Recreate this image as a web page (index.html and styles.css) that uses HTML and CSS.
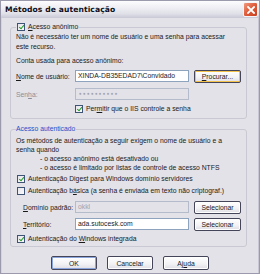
FILE: index.html
```html
<!DOCTYPE html>
<html>
<head>
<meta charset="utf-8">
<link rel="stylesheet" href="styles.css">
</head>
<body>
<div class="window">
  <div class="titlebar">
    <span class="title">Métodos de autenticação</span>
    <span class="close"><svg width="8" height="8" viewBox="0 0 8 8"><path d="M1 1L7 7M7 1L1 7" stroke="#fff" stroke-width="1.8" stroke-linecap="square"/></svg></span>
  </div>
  <div class="body">
    <div class="group g1">
      <div class="legend"><span class="cb on"></span><span><u>A</u>cesso anônimo</span></div>
      <p class="desc">Não é necessário ter um nome de usuário e uma senha para acessar<br>este recurso.</p>
      <p class="conta">Conta usada para acesso anônimo:</p>
      <div class="row r-nome">
        <span class="lbl"><u>N</u>ome de usuário:</span>
        <span class="input">XINDA-DB35EDAD7\Convidado</span>
        <span class="btn hot"><u>P</u>rocurar...</span>
      </div>
      <div class="row r-senha">
        <span class="lbl dim">Sen<u>h</u>a:</span>
        <span class="input off dots">●●●●●●●●●●</span>
      </div>
      <div class="cbrow r-permitir"><span class="cb on"></span><span>Per<u>m</u>itir que o IIS controle a senha</span></div>
    </div>
    <div class="group g2">
      <div class="legend blue">Acesso autenticado</div>
      <p class="desc2">Os métodos de autenticação a seguir exigem o nome de usuário e a<br>senha quando<br><span class="ind">- o acesso anônimo está desativado ou</span><br><span class="ind">- o acesso é limitado por listas de controle de acesso NTFS</span></p>
      <div class="cbrow r-digest"><span class="cb on"></span><span>Autenticação Digest para Windows domínio servidores</span></div>
      <div class="cbrow r-basica"><span class="cb"></span><span>Autenticação b<u>á</u>sica (a senha é enviada em texto não criptograf.)</span></div>
      <div class="row r-dominio">
        <span class="lbl2"><u>D</u>omínio padrão:</span>
        <span class="input off">okkl</span>
        <span class="btn">Selecionar</span>
      </div>
      <div class="row r-terr">
        <span class="lbl2"><u>T</u>erritório:</span>
        <span class="input">ada.sutocesk.com</span>
        <span class="btn">Selecionar</span>
      </div>
      <div class="cbrow r-win"><span class="cb on"></span><span>Autenticação do <u>W</u>indows integrada</span></div>
    </div>
    <div class="buttons">
      <span class="btn big def">OK</span>
      <span class="btn big">Cancelar</span>
      <span class="btn big">Aj<u>u</u>da</span>
    </div>
  </div>
</div>
</body>
</html>
```
FILE: styles.css
```css
* { box-sizing: border-box; }
html, body { margin: 0; padding: 0; background: #ffffff; }
body {
  font-family: "Liberation Sans", Arial, sans-serif;
  font-size: 6.8px;
  color: #1a1a1a;
}
u { text-decoration: underline; text-underline-offset: 1px; }
p { margin: 0; }

.window {
  width: 260px;
  height: 274px;
  background: #e3e2e8;
  border: 1px solid #9a9aac;
  display: flex;
  flex-direction: column;
}
.titlebar {
  height: 17px;
  flex: none;
  display: flex;
  align-items: center;
  justify-content: space-between;
  padding: 0 1px 0 4px;
  background: linear-gradient(#fdfdfe 0%, #f0f0f5 35%, #e0e0e8 75%, #c8c8d6 100%);
}
.title {
  font-family: "DejaVu Sans", sans-serif;
  font-weight: bold;
  font-size: 7.6px;
  letter-spacing: 0.1px;
  color: #101020;
}
.close {
  width: 15px;
  height: 15px;
  border: 1px solid #f4f4f8;
  border-radius: 2px;
  background: linear-gradient(135deg, #f09a80 0%, #e0603f 45%, #c8401f 100%);
  display: flex;
  align-items: center;
  justify-content: center;
}
.body {
  flex: 1;
  padding: 9px 11px 0 8px;
  border-left: 1px solid #d4d4dc;
  border-right: 1px solid #c8c8d4;
  display: flex;
  flex-direction: column;
}
.group {
  border: 1px solid #c9c9d3;
  border-radius: 3px;
  padding: 0 5px;
  display: flex;
  flex-direction: column;
}
.legend {
  align-self: flex-start;
  height: 10px;
  margin-top: -6px;
  padding: 0 1px;
  background: #e3e2e8;
  display: flex;
  align-items: center;
  gap: 3px;
  line-height: 10px;
}
.legend.blue { color: #1f4fc8; padding: 0 1px 0 0; }
.cb {
  width: 8px;
  height: 8px;
  flex: none;
  border: 1px solid #3e5474;
  background: linear-gradient(135deg, #e4e4ea, #fbfbfd);
  position: relative;
}
.cb.on::after {
  content: "";
  position: absolute;
  left: 1.6px;
  top: 0px;
  width: 2.2px;
  height: 4.2px;
  border: solid #1d9e1d;
  border-width: 0 1.8px 1.8px 0;
  transform: rotate(40deg);
}
.desc { line-height: 10px; }
.conta { line-height: 10px; margin-top: 4px; }
.row {
  display: flex;
  align-items: center;
  height: 14px;
}
.lbl { width: 59px; flex: none; }
.lbl2 { width: 52px; margin-left: 7px; flex: none; }
.dim { color: #8d8d99; }
.input {
  width: 114px;
  height: 12px;
  flex: none;
  border: 1px solid #8ea3bd;
  background: #fff;
  padding: 0 2px;
  line-height: 10px;
  white-space: nowrap;
  overflow: hidden;
}
.input.off { background: #e3e2e8; color: #a3a3ad; border-color: #b4bccb; }
.dots { font-size: 4.6px; letter-spacing: 1.2px; line-height: 10px; padding-left: 3px; color: #9a9aa6; }
.btn {
  display: flex;
  align-items: center;
  justify-content: center;
  height: 13px;
  width: 47px;
  flex: none;
  margin-left: 5px;
  border: 1px solid #45455a;
  border-radius: 2px;
  background: linear-gradient(#ffffff 0%, #f2f2f5 60%, #dcdce3 100%);
  box-shadow: inset 0 0 0 1px #ffffff;
}
.btn.hot { box-shadow: inset 0 0 0 1px #f3c24c; }
.btn.def { box-shadow: inset 0 0 0 1px #8aa6dc; }
.r-nome { margin-top: 3px; }
.r-senha { margin-top: 4px; }
.cbrow {
  display: flex;
  align-items: center;
  gap: 3px;
  height: 10px;
  line-height: 10px;
  padding-left: 1px;
  white-space: nowrap;
}
.r-permitir { margin-top: 3px; margin-left: 58px; margin-bottom: 4px; }

.g2 { margin-top: 10px; }
.desc2 { line-height: 9px; margin-top: 2px; }
.ind { padding-left: 24px; }
.r-digest { margin-top: 2px; }
.r-basica { margin-top: 2px; }
.r-dominio { margin-top: 4px; }
.r-terr { margin-top: 3px; }
.r-win { margin-top: 3px; margin-bottom: 2px; }

.buttons {
  display: flex;
  justify-content: center;
  gap: 10px;
  margin-top: 9px;
  padding-left: 3px;
}
.btn.big { width: 46px; height: 14px; margin-left: 0; }
```
